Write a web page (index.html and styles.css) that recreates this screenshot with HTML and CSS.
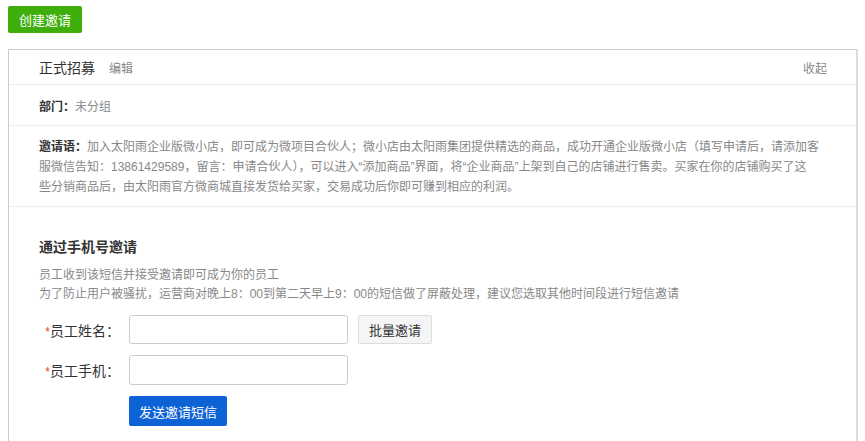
FILE: index.html
```html
<!DOCTYPE html>
<html lang="zh-CN">
<head>
<meta charset="utf-8">
<title>邀请</title>
<link rel="stylesheet" href="styles.css">
</head>
<body>
<div class="page">
  <button class="btn-create">创建邀请</button>
  <div class="panel">
    <div class="panel-head">
      <div class="head-left"><span class="title">正式招募</span><a class="edit">编辑</a></div>
      <a class="collapse">收起</a>
    </div>
    <div class="row dept"><b>部门：</b><span class="muted">未分组</span></div>
    <div class="row invite">
      <p><b class="lead">邀请语：</b><span class="muted">加入太阳雨企业版微小店，即可成为微项目合伙人；微小店由太阳雨集团提供精选的商品，成功开通企业版微小店（填写申请后，请添加客服微信告知：13861429589，留言：申请合伙人），可以进入“添加商品”界面，将“企业商品”上架到自己的店铺进行售卖。买家在你的店铺购买了这<br>些分销商品后，由太阳雨官方微商城直接发货给买家，交易成功后你即可赚到相应的利润。</span></p>
    </div>
    <div class="section">
      <h3 class="sec-title">通过手机号邀请</h3>
      <p class="hint">员工收到该短信并接受邀请即可成为你的员工<br>为了防止用户被骚扰，运营商对晚上8：00到第二天早上9：00的短信做了屏蔽处理，建议您选取其他时间段进行短信邀请</p>
      <div class="form">
        <div class="form-row">
          <label class="label"><span class="req">*</span>员工姓名：</label>
          <input class="input" type="text">
          <button class="btn-batch">批量邀请</button>
        </div>
        <div class="form-row">
          <label class="label"><span class="req">*</span>员工手机：</label>
          <input class="input tall" type="text">
        </div>
        <div class="form-row">
          <span class="label"></span>
          <button class="btn-send">发送邀请短信</button>
        </div>
      </div>
    </div>
  </div>
</div>
</body>
</html>
```

FILE: styles.css
```css
* { box-sizing: border-box; }
body {
  margin: 0;
  font-family: "Liberation Sans", "Noto Sans CJK SC", sans-serif;
  font-size: 12px;
  color: #333;
  background: #fff;
  overflow: hidden;
}
.page {
  padding: 6px 0 0 8px;
}
.btn-create {
  display: block;
  width: 74px;
  height: 27px;
  padding: 0;
  border: none;
  border-radius: 2px;
  background: #3dae0b;
  color: #fff;
  font-family: inherit;
  font-size: 13px;
}
.panel {
  margin-top: 16px;
  width: 850px;
  height: 400px;
  border-top: 1px solid #ccc;
  border-left: 1px solid #ccc;
  border-right: 2px solid #ddd;
}
.panel-head {
  height: 35px;
  padding: 0 29px 0 30px;
  display: flex;
  align-items: center;
  justify-content: space-between;
  border-bottom: 1px solid #eee;
}
.head-left { display: flex; align-items: baseline; }
.title { font-size: 14px; color: #333; }
.edit { margin-left: 14px; color: #888; font-size: 12px; }
.collapse { color: #888; font-size: 12px; }
.row {
  padding: 0 30px;
  border-bottom: 1px solid #eee;
}
.dept {
  height: 41px;
  display: flex;
  align-items: center;
}
.dept b { font-weight: bold; color: #333; }
.muted { color: #888; }
.invite { padding-top: 11px; padding-bottom: 9px; }
.invite p {
  margin: 0;
  line-height: 20px;
}
.invite b { color: #333; }
.section {
  padding: 30px 30px 0 30px;
}
.sec-title {
  margin: 0;
  font-size: 14px;
  font-weight: bold;
  line-height: 20px;
  color: #333;
}
.hint {
  margin: 9px 0 0;
  line-height: 19px;
  color: #888;
}
.form {
  margin-top: 11px;
  display: flex;
  flex-direction: column;
  gap: 11px;
}
.form-row {
  display: flex;
  align-items: center;
}
.label {
  width: 85px;
  margin-right: 5px;
  padding-right: 4px;
  text-align: right;
  font-size: 14px;
  color: #333;
}
.req { color: #e4393c; font-size: 12px; }
.input {
  width: 219px;
  height: 29px;
  border: 1px solid #ccc;
  border-radius: 3px;
  padding: 0 6px;
}
.input.tall { height: 30px; }
.btn-batch {
  margin-left: 10px;
  width: 74px;
  height: 29px;
  padding: 0;
  border: 1px solid #ddd;
  border-radius: 2px;
  background: #f5f5f5;
  color: #333;
  font-family: inherit;
  font-size: 13px;
}
.btn-send {
  width: 98px;
  height: 30px;
  padding: 0;
  border: none;
  border-radius: 2px;
  background: #0d62d6;
  color: #fff;
  font-family: inherit;
  font-size: 13px;
}
```
